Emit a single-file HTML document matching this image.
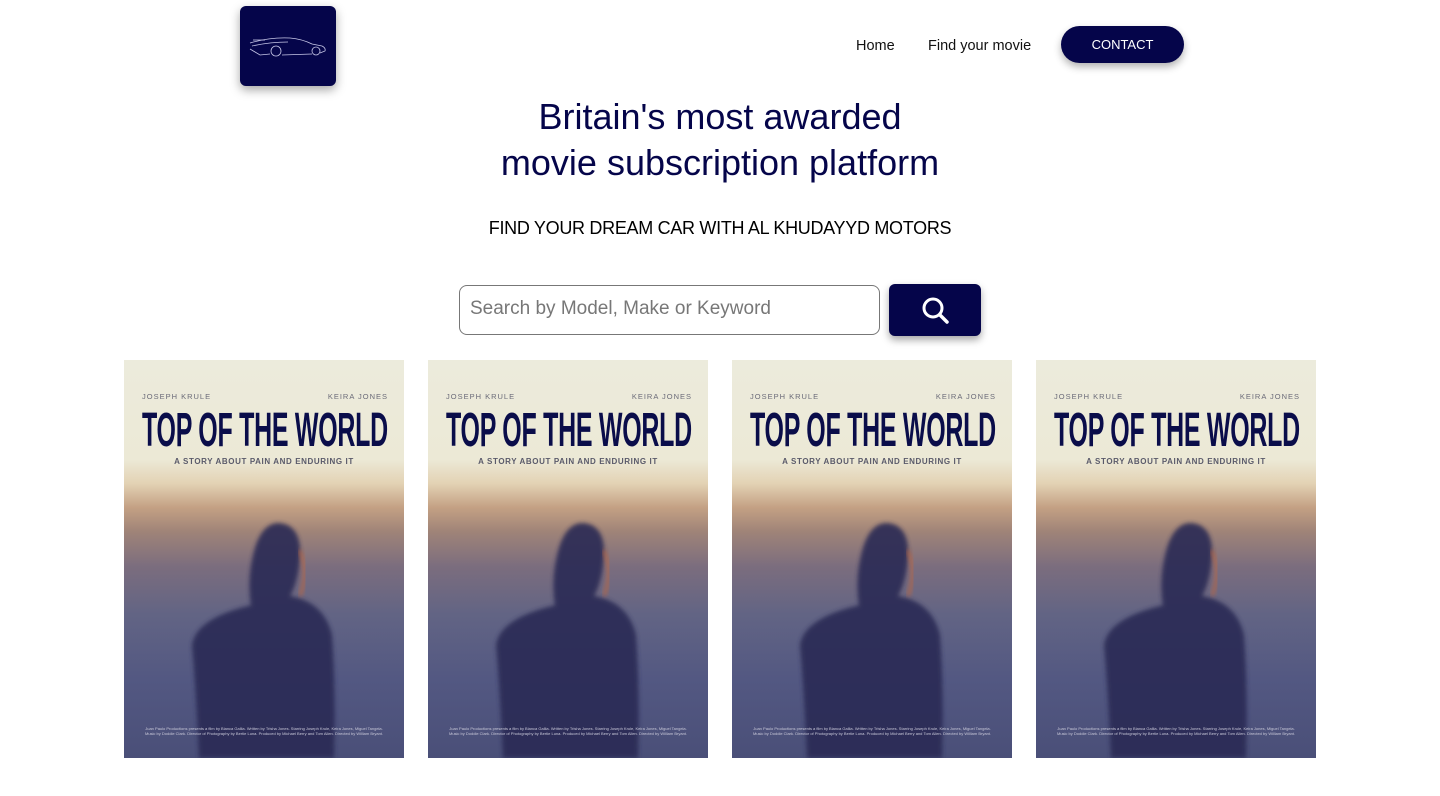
<!DOCTYPE html>
<html><head><meta charset="utf-8"><style>
*{margin:0;padding:0;box-sizing:border-box}
body{width:1440px;height:796px;background:#fff;font-family:"Liberation Sans",sans-serif;position:relative;overflow:hidden}
.logo{position:absolute;left:240px;top:6px;width:96px;height:80px;background:#05054a;border-radius:6px;box-shadow:0 4px 10px rgba(0,0,0,.35)}
.nav{position:absolute;top:38px;font-size:14.5px;color:#111}
.contact{position:absolute;left:1061px;top:26px;width:123px;height:37px;background:#05054a;border-radius:19px;color:#fff;font-size:13px;text-align:center;line-height:37px;box-shadow:0 4px 8px rgba(0,0,0,.3)}
h1{position:absolute;top:94px;left:0;width:1440px;text-align:center;font-weight:normal;font-size:36px;line-height:46px;color:#05054a}
.sub{position:absolute;top:218px;left:0;width:1440px;text-align:center;font-size:18px;color:#000;letter-spacing:-0.3px}
.search{position:absolute;left:459px;top:285px;width:421px;height:50px;border:1px solid #777;border-radius:8px;font-size:19px;color:#777;padding:12px 10px}
.sbtn{position:absolute;left:889px;top:284px;width:92px;height:52px;background:#05054a;border-radius:6px;box-shadow:0 4px 8px rgba(0,0,0,.35)}
.poster{position:absolute;top:360px;width:280px;height:398px;overflow:hidden;background:linear-gradient(180deg,#ecebdc 0%,#ece9d6 25%,#e3d2b4 31%,#c4a184 37%,#a08478 43%,#7b6d7e 52%,#626484 64%,#535882 80%,#4a4f78 100%)}
.names{position:absolute;top:32px;left:18px;right:16px;font-size:7.5px;letter-spacing:1px;color:#6a6a78;display:flex;justify-content:space-between}
.title{position:absolute;top:43px;left:18px;font-weight:bold;font-size:48px;color:#0a0d4a;transform:scaleX(.52);transform-origin:left top;white-space:nowrap;letter-spacing:-0.5px}
.tag{position:absolute;top:97px;left:0;width:280px;text-align:center;font-size:8px;letter-spacing:.6px;color:#5a5a6a;font-weight:bold}
.credit{position:absolute;top:366px;left:20px;width:240px;text-align:center;font-size:4px;line-height:5px;color:#c8c8d8}
</style></head><body>
<div class="logo"><svg width="96" height="80" viewBox="0 0 96 80"><g fill="none" stroke="#c8c8e8" stroke-width="0.8"><path d="M10 37 Q30 31 50 32 Q62 33 72 38 L82 40 Q86 42 85 45 L80 47"/><path d="M12 40 Q30 36 48 36"/><path d="M10 43 L20 49 L30 48 M42 49 L72 48"/><circle cx="36" cy="45" r="5"/><circle cx="76" cy="45" r="4"/><path d="M13 34 L25 34"/></g></svg></div>
<div class="nav" style="left:856px">Home</div>
<div class="nav" style="left:928px">Find your movie</div>
<div class="contact">CONTACT</div>
<h1>Britain's most awarded<br>movie subscription platform</h1>
<div class="sub">FIND YOUR DREAM CAR WITH AL KHUDAYYD MOTORS</div>
<div class="search">Search by Model, Make or Keyword</div>
<div class="sbtn"><svg width="92" height="52" viewBox="0 0 92 52"><circle cx="44" cy="24" r="9" fill="none" stroke="#fff" stroke-width="3"/><path d="M51 31 L58 38" stroke="#fff" stroke-width="3.5" stroke-linecap="round"/></svg></div>

<div class="poster" style="left:124px"><svg style="position:absolute;left:0;top:0" width="280" height="398"><defs><filter id="b"><feGaussianBlur stdDeviation="2"/></filter></defs><path d="M130 260 Q122 230 128 200 Q135 163 155 163 Q178 165 176 198 Q174 222 166 236 Q200 242 208 275 Q212 330 210 398 L75 398 Q72 330 68 285 Q72 258 128 245Z" fill="#2a2c55" opacity=".9" filter="url(#b)"/><path d="M175 190 Q186 210 176 236" stroke="#c4663a" stroke-width="4" fill="none" opacity=".6" filter="url(#b)"/></svg><div class="names"><span>JOSEPH KRULE</span><span>KEIRA JONES</span></div><div class="title">TOP OF THE WORLD</div><div class="tag">A STORY ABOUT PAIN AND ENDURING IT</div><div class="credit">Juan Paulo Productions presents a film by Bianca Gallia. Written by Trisha Jones. Starring Joseph Krule, Keira Jones, Miguel Tangela. Music by Doddie Clark. Director of Photography by Bertie Luna. Produced by Michael Berry and Tom Allen. Directed by William Bryant.</div></div>
<div class="poster" style="left:428px"><svg style="position:absolute;left:0;top:0" width="280" height="398"><path d="M130 260 Q122 230 128 200 Q135 163 155 163 Q178 165 176 198 Q174 222 166 236 Q200 242 208 275 Q212 330 210 398 L75 398 Q72 330 68 285 Q72 258 128 245Z" fill="#2a2c55" opacity=".9" filter="url(#b)"/><path d="M175 190 Q186 210 176 236" stroke="#c4663a" stroke-width="4" fill="none" opacity=".6" filter="url(#b)"/></svg><div class="names"><span>JOSEPH KRULE</span><span>KEIRA JONES</span></div><div class="title">TOP OF THE WORLD</div><div class="tag">A STORY ABOUT PAIN AND ENDURING IT</div><div class="credit">Juan Paulo Productions presents a film by Bianca Gallia. Written by Trisha Jones. Starring Joseph Krule, Keira Jones, Miguel Tangela. Music by Doddie Clark. Director of Photography by Bertie Luna. Produced by Michael Berry and Tom Allen. Directed by William Bryant.</div></div>
<div class="poster" style="left:732px"><svg style="position:absolute;left:0;top:0" width="280" height="398"><path d="M130 260 Q122 230 128 200 Q135 163 155 163 Q178 165 176 198 Q174 222 166 236 Q200 242 208 275 Q212 330 210 398 L75 398 Q72 330 68 285 Q72 258 128 245Z" fill="#2a2c55" opacity=".9" filter="url(#b)"/><path d="M175 190 Q186 210 176 236" stroke="#c4663a" stroke-width="4" fill="none" opacity=".6" filter="url(#b)"/></svg><div class="names"><span>JOSEPH KRULE</span><span>KEIRA JONES</span></div><div class="title">TOP OF THE WORLD</div><div class="tag">A STORY ABOUT PAIN AND ENDURING IT</div><div class="credit">Juan Paulo Productions presents a film by Bianca Gallia. Written by Trisha Jones. Starring Joseph Krule, Keira Jones, Miguel Tangela. Music by Doddie Clark. Director of Photography by Bertie Luna. Produced by Michael Berry and Tom Allen. Directed by William Bryant.</div></div>
<div class="poster" style="left:1036px"><svg style="position:absolute;left:0;top:0" width="280" height="398"><path d="M130 260 Q122 230 128 200 Q135 163 155 163 Q178 165 176 198 Q174 222 166 236 Q200 242 208 275 Q212 330 210 398 L75 398 Q72 330 68 285 Q72 258 128 245Z" fill="#2a2c55" opacity=".9" filter="url(#b)"/><path d="M175 190 Q186 210 176 236" stroke="#c4663a" stroke-width="4" fill="none" opacity=".6" filter="url(#b)"/></svg><div class="names"><span>JOSEPH KRULE</span><span>KEIRA JONES</span></div><div class="title">TOP OF THE WORLD</div><div class="tag">A STORY ABOUT PAIN AND ENDURING IT</div><div class="credit">Juan Paulo Productions presents a film by Bianca Gallia. Written by Trisha Jones. Starring Joseph Krule, Keira Jones, Miguel Tangela. Music by Doddie Clark. Director of Photography by Bertie Luna. Produced by Michael Berry and Tom Allen. Directed by William Bryant.</div></div>
</body></html>
